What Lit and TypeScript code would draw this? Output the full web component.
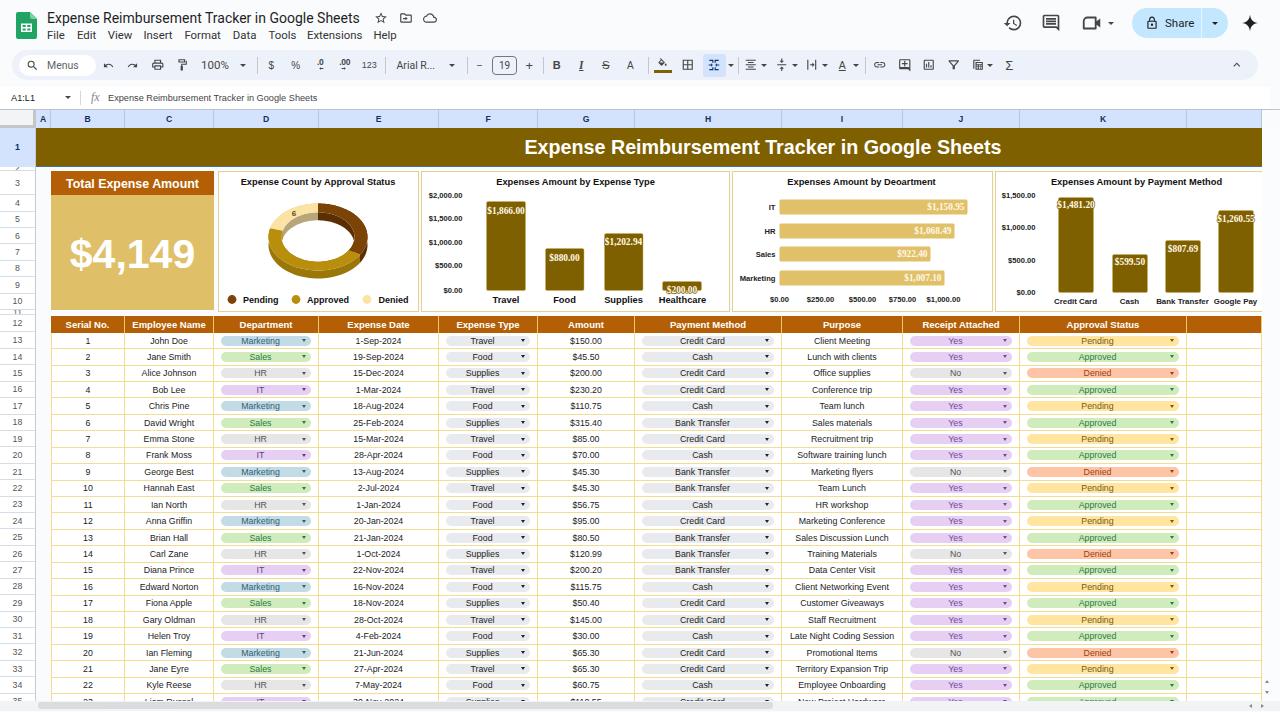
import { LitElement, html, css, svg } from "lit";
import { customElement } from "lit/decorators.js";

const P: Record<string, string> = {
  search: "M15.5 14h-.79l-.28-.27A6.47 6.47 0 0 0 16 9.5 6.5 6.5 0 1 0 9.5 16c1.61 0 3.09-.59 4.23-1.57l.27.28v.79l5 4.99L20.49 19l-4.99-5zm-6 0C7.01 14 5 11.99 5 9.5S7.01 5 9.5 5 14 7.01 14 9.5 11.99 14 9.5 14z",
  undo: "M12.5 8c-2.65 0-5.05.99-6.9 2.6L2 7v9h9l-3.62-3.62c1.39-1.16 3.16-1.88 5.12-1.88 3.54 0 6.55 2.31 7.6 5.5l2.37-.78C21.08 11.03 17.15 8 12.5 8z",
  redo: "M18.4 10.6C16.55 8.99 14.15 8 11.5 8c-4.65 0-8.58 3.03-9.96 7.22L3.9 16c1.05-3.19 4.05-5.5 7.6-5.5 1.95 0 3.73.72 5.12 1.88L13 16h9V7l-3.6 3.6z",
  print: "M19 8h-1V3H6v5H5c-1.66 0-3 1.34-3 3v6h4v4h12v-4h4v-6c0-1.66-1.34-3-3-3zM8 5h8v3H8V5zm8 12v2H8v-4h8v2zm2-2v-2H6v2H4v-4c0-.55.45-1 1-1h14c.55 0 1 .45 1 1v4h-2z",
  paint: "M6 2h12v6H6V2zm2 2v2h8V4H8zm11 1h2v7h-8v2h1v8h-4v-8h1v-4h8V5z",
  borders: "M3 3v18h18V3H3zm8 16H5v-6h6v6zm0-8H5V5h6v6zm8 8h-6v-6h6v6zm0-8h-6V5h6v6z",
  bucket: "M16.56 8.94L7.62 0 6.21 1.41l2.38 2.38-5.15 5.15c-.59.59-.59 1.54 0 2.12l5.5 5.5c.29.29.68.44 1.06.44s.77-.15 1.06-.44l5.5-5.5c.59-.58.59-1.53 0-2.12zM5.21 10L10 5.21 14.79 10H5.21zM19 11.5s-2 2.17-2 3.5c0 1.1.9 2 2 2s2-.9 2-2c0-1.33-2-3.5-2-3.5z",
  merge: "M4 3h7v5H9V5H4V3zM20 3h-7v5h2V5h5V3zM4 21h7v-5H9v3H4v2zM20 21h-7v-5h2v3h5v2zM3 11h4V9l3 3-3 3v-2H3v-2zM21 11h-4V9l-3 3 3 3v-2h4v-2z",
  align: "M7 15v2h10v-2H7zm-4 6h18v-2H3v2zm0-8h18v-2H3v2zm4-6v2h10V7H7zM3 3v2h18V3H3z",
  valign: "M8 19h3v4h2v-4h3l-4-4-4 4zm8-14h-3V1h-2v4H8l4 4 4-4zM4 11v2h16v-2H4z",
  wrap: "M4 3h2v18H4V3zm14 0h2v18h-2V3zM9 11h4V8l4 4-4 4v-3H9v-2z",
  link: "M3.9 12c0-1.71 1.39-3.1 3.1-3.1h4V7H7c-2.76 0-5 2.24-5 5s2.24 5 5 5h4v-1.9H7c-1.71 0-3.1-1.39-3.1-3.1zM8 13h8v-2H8v2zm9-6h-4v1.9h4c1.71 0 3.1 1.39 3.1 3.1s-1.39 3.1-3.1 3.1h-4V17h4c2.76 0 5-2.24 5-5s-2.24-5-5-5z",
  addc: "M20 2H4c-1.1 0-2 .9-2 2v14c0 1.1.9 2 2 2h14l4 4V4c0-1.1-.9-2-2-2zm0 15.17L18.83 16H4V4h16v13.17zM13 5h-2v4H7v2h4v4h2v-4h4V9h-4z",
  chart: "M19 3H5c-1.1 0-2 .9-2 2v14c0 1.1.9 2 2 2h14c1.1 0 2-.9 2-2V5c0-1.1-.9-2-2-2zm0 16H5V5h14v14zM7 10h2v7H7zm4-3h2v10h-2zm4 6h2v4h-2z",
  filter: "M3 4h18v2l-7 8v6h-4v-6L3 6V4zm2.6 2l6.4 7.2L18.4 6H5.6z",
  func: "M5 3h11v2H6v14H4V4a1 1 0 0 1 1-1zm3 4h13v14H8V7zm2 2v2h9V9h-9zm0 4v2h2v-2h-2zm4 0v2h2v-2h-2zm3 0v2h2v-2h-2zm-7 3v3h2v-3h-2zm4 0v3h2v-3h-2zm3 0v3h2v-3h-2z",
  up: "M7.41 15.41L12 10.83l4.59 4.58L18 14l-6-6-6 6z",
  history: "M13 3a9 9 0 0 0-9 9H1l3.89 3.89.07.14L9 12H6c0-3.87 3.13-7 7-7s7 3.13 7 7-3.13 7-7 7c-1.93 0-3.68-.79-4.94-2.06l-1.42 1.42A8.954 8.954 0 0 0 13 21a9 9 0 0 0 0-18zm-1 5v5l4.28 2.54.72-1.21-3.5-2.08V8H12z",
  comment: "M21.99 4c0-1.1-.89-2-1.99-2H4c-1.1 0-2 .9-2 2v12c0 1.1.9 2 2 2h14l4 4-.01-18zM20 4v13.17L18.83 16H4V4h16zM6 12h12v2H6zm0-3h12v2H6zm0-3h12v2H6z",
  video: "M7 5h9a1 1 0 0 1 1 1v4l4-3v10l-4-3v4a1 1 0 0 1-1 1H3a1 1 0 0 1-1-1V10a5 5 0 0 1 5-5zm0 2a3 3 0 0 0-3 3v7h11V7H7z",
  lock: "M18 8h-1V6c0-2.76-2.24-5-5-5S7 3.24 7 6v2H6c-1.1 0-2 .9-2 2v10c0 1.1.9 2 2 2h12c1.1 0 2-.9 2-2V10c0-1.1-.9-2-2-2zM9 6c0-1.66 1.34-3 3-3s3 1.34 3 3v2H9V6zm9 14H6V10h12v10zm-6-3c1.1 0 2-.9 2-2s-.9-2-2-2-2 .9-2 2 .9 2 2 2z",
  spark: "M12 1C13 8 16 11 23 12 16 13 13 16 12 23 11 16 8 13 1 12 8 11 11 8 12 1z",
  star: "M22 9.24l-7.19-.62L12 2 9.19 8.63 2 9.24l5.46 4.73L5.82 21 12 17.27 18.18 21l-1.63-7.03L22 9.24zM12 15.4l-3.76 2.27 1-4.28-3.32-2.88 4.38-.38L12 6.1l1.71 4.04 4.38.38-3.32 2.88 1 4.28L12 15.4z",
  folder: "M20 6h-8l-2-2H4c-1.11 0-2 .89-2 2v12c0 1.11.89 2 2 2h16c1.11 0 2-.89 2-2V8c0-1.11-.89-2-2-2zm0 12H4V6h5.17l2 2H20v10zM11 12v-2l4 3-4 3v-2H7v-2h4z",
  cloud: "M19.35 10.04C18.67 6.59 15.64 4 12 4 9.11 4 6.6 5.64 5.35 8.04 2.34 8.36 0 10.91 0 14c0 3.31 2.69 6 6 6h13c2.76 0 5-2.24 5-5 0-2.64-2.05-4.78-4.65-4.96zM19 18H6c-2.21 0-4-1.79-4-4 0-2.05 1.53-3.76 3.56-3.97l1.07-.11.5-.95C8.08 7.14 9.94 6 12 6c2.62 0 4.88 1.86 5.39 4.43l.3 1.5 1.53.11c1.56.1 2.78 1.41 2.78 2.96 0 1.65-1.35 3-3 3z",
  arl: "M8 12l5-5v3h9v4h-9v3z",
  arr: "M16 12l-5-5v3H2v4h9v3z",
};

const ic = (n: string, cls = "") => html`<svg class="ic ${cls}" viewBox="0 0 24 24"><path d=${P[n]}></path></svg>`;
const caret = html`<span class="caret"></span>`;

type Row = [string, string, string, string, string, string, string];
const ROWS: Row[] = [
  ["John Doe", "1-Sep-2024", "Travel", "$150.00", "Credit Card", "Client Meeting", "P"],
  ["Jane Smith", "19-Sep-2024", "Food", "$45.50", "Cash", "Lunch with clients", "A"],
  ["Alice Johnson", "15-Dec-2024", "Supplies", "$200.00", "Credit Card", "Office supplies", "D"],
  ["Bob Lee", "1-Mar-2024", "Travel", "$230.20", "Credit Card", "Conference trip", "A"],
  ["Chris Pine", "18-Aug-2024", "Food", "$110.75", "Cash", "Team lunch", "P"],
  ["David Wright", "25-Feb-2024", "Supplies", "$315.40", "Bank Transfer", "Sales materials", "A"],
  ["Emma Stone", "15-Mar-2024", "Travel", "$85.00", "Credit Card", "Recruitment trip", "P"],
  ["Frank Moss", "28-Apr-2024", "Food", "$70.00", "Cash", "Software training lunch", "A"],
  ["George Best", "13-Aug-2024", "Supplies", "$45.30", "Bank Transfer", "Marketing flyers", "D"],
  ["Hannah East", "2-Jul-2024", "Travel", "$45.30", "Bank Transfer", "Team Lunch", "P"],
  ["Ian North", "1-Jan-2024", "Food", "$56.75", "Cash", "HR workshop", "A"],
  ["Anna Griffin", "20-Jan-2024", "Travel", "$95.00", "Credit Card", "Marketing Conference", "P"],
  ["Brian Hall", "21-Jan-2024", "Food", "$80.50", "Bank Transfer", "Sales Discussion Lunch", "A"],
  ["Carl Zane", "1-Oct-2024", "Supplies", "$120.99", "Bank Transfer", "Training Materials", "D"],
  ["Diana Prince", "22-Nov-2024", "Travel", "$200.20", "Bank Transfer", "Data Center Visit", "A"],
  ["Edward Norton", "16-Nov-2024", "Food", "$115.75", "Cash", "Client Networking Event", "P"],
  ["Fiona Apple", "18-Nov-2024", "Supplies", "$50.40", "Credit Card", "Customer Giveaways", "A"],
  ["Gary Oldman", "28-Oct-2024", "Travel", "$145.00", "Credit Card", "Staff Recruitment", "P"],
  ["Helen Troy", "4-Feb-2024", "Food", "$30.00", "Cash", "Late Night Coding Session", "A"],
  ["Ian Fleming", "21-Jun-2024", "Supplies", "$65.30", "Credit Card", "Promotional Items", "D"],
  ["Jane Eyre", "27-Apr-2024", "Travel", "$65.30", "Credit Card", "Territory Expansion Trip", "P"],
  ["Kyle Reese", "7-May-2024", "Food", "$60.75", "Cash", "Employee Onboarding", "A"],
  ["Liam Russel", "30-Nov-2024", "Supplies", "$110.55", "Credit Card", "New Project Hardware", "A"],
];
const DEPTS = ["Marketing", "Sales", "HR", "IT"];
const DCLS: Record<string, string> = { Marketing: "mk", Sales: "gr", HR: "gy", IT: "pu" };
const ST: Record<string, [string, string]> = { P: ["Pending", "ye"], A: ["Approved", "gr"], D: ["Denied", "or"] };
const HEAD = ["Serial No.", "Employee Name", "Department", "Expense Date", "Expense Type", "Amount", "Payment Method", "Purpose", "Receipt Attached", "Approval Status", ""];
const COLS: [string, number][] = [["A", 15], ["B", 74], ["C", 89], ["D", 105], ["E", 120], ["F", 99], ["G", 97], ["H", 147], ["I", 121], ["J", 117], ["K", 167], ["", 75]];

// Row gutter heights, taken from the sheet's row geometry.
const RH: [number, number][] = [[1, 38.5], [2, 4.7], [3, 24], ...[4, 5, 6, 7, 8, 9, 10].map((n) => [n, 16.4] as [number, number]), [11, 5], [12, 17.5], ...Array.from({ length: 23 }, (_, i) => [13 + i, 16.43] as [number, number])];

const pill = (t: string, cls: string) => html`<span class="pill ${cls}"><span class="pt">${t}</span><i></i></span>`;

const MENU = ["File", "Edit", "View", "Insert", "Format", "Data", "Tools", "Extensions", "Help"];

function ringPoints(cx: number, cy: number, rx: number, ry: number, a0: number, a1: number) {
  const pts: [number, number][] = [];
  for (let k = 0; k <= 48; k++) {
    const t = ((a0 + ((a1 - a0) * k) / 48) * Math.PI) / 180;
    pts.push([cx + rx * Math.sin(t), cy - ry * Math.cos(t)]);
  }
  return pts;
}
const poly = (p: [number, number][]) => p.map((q) => `${q[0].toFixed(2)},${q[1].toFixed(2)}`).join(" ");

function donut() {
  const cx = 318, cy = 236.5, d = 8;
  const segs: [number, number, string, string, string][] = [
    [0, 122, "#7b4306", "#5a2f03", "#5a2f03"],
    [122, 285, "#b98e0c", "#9a7708", "#8a6a06"],
    [285, 360, "#fbe3a4", "#d6c083", "#b8a57c"],
  ];
  const shift = (p: [number, number][]) => p.map((q) => [q[0], q[1] + d] as [number, number]);
  return svg`
    ${segs.map(([a, b, , side]) => {
      const o = ringPoints(cx, cy, 49.5, 33.5, a, b);
      return svg`<polygon points=${poly([...o, ...shift(o).reverse()])} fill=${side}></polygon>`;
    })}
    ${segs.map(([a, b, , , wall]) => {
      const o = ringPoints(cx, cy, 36.5, 24.7, a, b);
      return svg`<polygon points=${poly([...o, ...shift(o).reverse()])} fill=${wall}></polygon>`;
    })}
    ${segs.map(([a, b, top]) => {
      const o = ringPoints(cx, cy, 49.5, 33.5, a, b);
      const n = ringPoints(cx, cy, 36.5, 24.7, a, b);
      return svg`<polygon points=${poly([...o, ...n.reverse()])} fill=${top}></polygon>`;
    })}
    <text x="294" y="215" class="six" text-anchor="middle">6</text>
  `;
}

const title = (x: number, t: string) => svg`<text x=${x} y="184" class="ct" text-anchor="middle">${t}</text>`;
const ax = (x: number, y: number, t: string, a = "end") => svg`<text x=${x} y=${y} class="ax" text-anchor=${a}>${t}</text>`;
const bar = (x: number, top: number, w: number, bottom: number) => svg`<rect x=${x} y=${top} width=${w} height=${bottom - top} rx="1.5" fill="#7f6000" stroke="#c9b15f" stroke-width=".5"></rect>`;
const val = (x: number, y: number, t: string, a = "middle", cls = "dv") => svg`<text x=${x} y=${y} class=${cls} text-anchor=${a}>${t}</text>`;

@customElement("app-root")
export class AppRoot extends LitElement {
  static styles = css`
    :host { display: block; width: 1280px; height: 712px; overflow: hidden; background: #f9fbfd; font-family: "Liberation Sans", Arial, sans-serif; color: #222; position: relative; }
    * { box-sizing: border-box; }
    .ic { width: 16px; height: 16px; fill: #444746; display: block; flex: none; }
    .topbar { height: 50px; display: flex; position: relative; }
    .logo { width: 21px; height: 27px; margin: 12px 10px 0 16px; flex: none; }
    .docinfo { width: 420px; }
    .doctitle { display: flex; align-items: center; height: 18px; margin-top: 9px; font: 14px Roboto, sans-serif; color: #1f1f1f; white-space: nowrap; }
    .doctitle span { width: 313px; flex: none; }
    .doctitle .ic { width: 14px; height: 14px; margin-right: 10.5px; }
    .doctitle .first { margin-left: 14px; }
    .menu { display: flex; font: 11.4px Roboto, sans-serif; color: #333; height: 16px; align-items: center; }
    .menu span:nth-child(1) { margin-right: 12px; }
    .menu span:nth-child(2) { margin-right: 11.6px; }
    .menu span:nth-child(3) { margin-right: 11px; }
    .menu span:nth-child(4) { margin-right: 11.8px; }
    .menu span:nth-child(5) { margin-right: 12px; }
    .menu span:nth-child(6) { margin-right: 12px; }
    .menu span:nth-child(7) { margin-right: 10.6px; }
    .menu span:nth-child(8) { margin-right: 11px; }
    .right { margin-left: auto; display: flex; align-items: center; height: 46px; padding-right: 21px; }
    .right .ic { width: 20px; height: 20px; }
    .right .c { margin-left: 18px; }
    .right .v { margin-left: 20px; width: 22px; height: 22px; }
    .right .caret { margin: 0 0 0 5px; }
    .share { width: 96px; height: 30px; border-radius: 15px; background: #c2e7ff; margin-left: 17.6px; display: flex; align-items: center; font: 11.5px Roboto, sans-serif; color: #1f1f1f; }
    .share .ic { width: 14px; height: 14px; margin-left: 13px; fill: #1f1f1f; }
    .share b { font-weight: 400; margin-left: 6px; width: 35.5px; }
    .share em { display: block; width: 1px; height: 30px; background: #e6f4ff; }
    .right .share .caret { margin-left: 10px; border-top-color: #1f1f1f; }
    .right .sp { margin-left: 13px; width: 18px; height: 18px; fill: #1f1f1f; }
    .toolbar { height: 30px; margin: 0 22px 0 12px; background: #edf2fa; border-radius: 15px; display: flex; align-items: center; padding-left: 7px; font-size: 10.5px; color: #444746; }
    .search { width: 77px; height: 21px; background: #fff; border-radius: 11px; display: flex; align-items: center; padding-left: 7px; font: 10.5px Roboto, sans-serif; color: #5f6368; flex: none; }
    .search .ic { width: 13px; height: 13px; margin-right: 8px; }
    .i { width: 24.5px; height: 23px; display: flex; align-items: center; justify-content: center; flex: none; font-size: 10px; color: #444746; }
    .i .ic { width: 13.5px; height: 13.5px; }
    .i .sm { width: 11px; height: 11px; }
    .caret { width: 0; height: 0; border: 3.2px solid transparent; border-top: 3.6px solid #444746; border-bottom: 0; display: block; flex: none; }
    .car { width: 8px; display: flex; justify-content: center; flex: none; }
    .sep { width: 1px; height: 17px; background: #c7c7c7; flex: none; }
    .zoom { margin-left: 7px; width: 29px; font: 11.5px Roboto, sans-serif; flex: none; }
    .ml9 { margin-left: 9px; } .ml10 { margin-left: 10px; } .ml11 { margin-left: 11px; } .ml1 { margin-left: 1px; } .ml2 { margin-left: 2px; } .ml3 { margin-left: 3px; } .ml5 { margin-left: 5px; } .mn3 { margin-left: -3px; } .mn4 { margin-left: -4px; }
    .font { width: 40px; font: 10.5px Roboto, sans-serif; flex: none; white-space: nowrap; }
    .fs { width: 25px; height: 19px; border: 1px solid #747775; border-radius: 4px; display: flex; align-items: center; justify-content: center; font: 10px Roboto, sans-serif; flex: none; }
    .merge { width: 23px; height: 23px; background: #d3e3fd; border-radius: 3px; display: flex; align-items: center; justify-content: center; flex: none; }
    .merge .ic { width: 14px; height: 14px; fill: #0b3a6e; }
    .fill { flex-direction: column; }
    .fill .ic { width: 11px; height: 11px; }
    .fill u { display: block; width: 18px; height: 2.5px; background: #7f6000; margin-top: 1.5px; }
    .bi { font-weight: 700; font-size: 11px; }
    .it { font-style: italic; font-weight: 700; font-size: 11.5px; text-decoration: underline; font-family: "Liberation Serif", serif; }
    .st { text-decoration: line-through; font-size: 11.5px; }
    .dec { flex-direction: column; font-size: 8.5px; font-weight: 700; letter-spacing: -.2px; line-height: 8px; }
    .dec .ic { width: 7px; height: 7px; margin-top: -1px; }
    .n123 { font-size: 9px; }
    .plus { font-size: 13px; }
    .rot { font-size: 10.5px; text-decoration: underline; }
    .sig { font-size: 13px; }
    .chev { margin-left: auto; margin-right: 9px; }
    .formula { margin-top: 6.5px; height: 22px; margin-right: 10px; background: #fff; display: flex; align-items: center; font-size: 9px; color: #444; }
    .cellref { width: 65px; padding-left: 11px; font-size: 9.2px; color: #222; flex: none; }
    .formula .sep { height: 14px; margin: 0 10px 0 9px; background: #d5d7da; }
    .fx { font: italic 12px "Liberation Serif", serif; color: #80868b; width: 17px; flex: none; }
    .formula .tx { font: 9.2px "Liberation Sans", sans-serif; color: #444; }
    .sheet { display: flex; flex-direction: column; margin-top: .5px; height: 591.5px; overflow: hidden; }
    .colbar { display: flex; height: 19px; flex: none; border-top: 1px solid #bcc3cc; }
    .corner { width: 36px; background: #f3f4f6; border-right: 3px solid #c4c7c5; border-bottom: 3px solid #c4c7c5; flex: none; }
    .colh { background: #d3e3fd; border-right: 1px solid #b8c6dc; display: flex; align-items: center; justify-content: center; font-size: 8.6px; font-weight: 700; color: #12305a; flex: none; }
    .sbody { display: flex; flex: 1; min-height: 0; }
    .rows { width: 36px; flex: none; background: #fff; border-right: 1px solid #c7cad0; }
    .rh { display: flex; align-items: center; justify-content: center; overflow: hidden; font-size: 8.8px; color: #555; border-bottom: 1px solid #d9dce0; }
    .rh.sel { background: #d3e3fd; font-weight: 700; color: #12305a; border-bottom: 0; }
    .main { width: 1226px; flex: none; background: #f9fbfd; }
    .gutter { flex: 1; background: #fbfcfd; }
    .band { height: 38.5px; background: #7f6000; border-bottom: 1.5px solid #44709a; color: #fff; font-weight: 700; font-size: 19.7px; display: flex; align-items: center; justify-content: center; padding: 1.5px 0 0 228px; white-space: nowrap; }
    .dash { height: 149.3px; margin-left: 15px; display: flex; padding-top: 4.2px; align-items: flex-start; }
    .total { width: 163px; height: 139px; margin-top: .8px; background: #dfc068; display: flex; flex-direction: column; flex: none; color: #fff; font-weight: 700; }
    .total .hd { height: 24px; background: #b45f06; display: flex; align-items: center; justify-content: center; font-size: 12.4px; padding-top: 1px; }
    .total .big { flex: 1; display: flex; align-items: center; justify-content: center; font-size: 41px; padding-top: 3px; }
    .chart { height: 141px; background: #fff; border: 1.5px solid #e6d08f; flex: none; }
    .chart svg { display: block; }
    .c1 { width: 201.5px; margin-left: 3.5px; }
    .c2 { width: 309px; margin-left: 2px; }
    .c3 { width: 261px; margin-left: 2px; }
    .c4 { width: 267px; margin-left: 2px; border-right: 0; }
    .ct { font: 700 9.3px "Liberation Sans", sans-serif; fill: #111; }
    .ax { font: 700 7.6px "Liberation Sans", sans-serif; fill: #222; }
    .cat { font: 700 9.3px "Liberation Sans", sans-serif; fill: #111; }
    .cat2 { font: 700 7.9px "Liberation Sans", sans-serif; fill: #222; }
    .dv { font: 700 9.4px "Liberation Serif", serif; fill: #fff8e6; stroke: #7f6000; stroke-width: 1.4px; paint-order: stroke; }
    .dh { font: 700 9.3px "Liberation Serif", serif; fill: #fff8e6; }
    .six { font: 700 8px "Liberation Sans", sans-serif; fill: #5a4a20; }
    .lg { font: 700 9px "Liberation Sans", sans-serif; fill: #111; }
    .table { margin-left: 15px; display: grid; grid-template-columns: 74px 89px 105px 120px 99px 97px 147px 121px 117px 167px 75px; grid-template-rows: 17px; grid-auto-rows: 16.43px; background: #fff; }
    .th { background: #b45f06; color: #fff; font-weight: 700; font-size: 9.5px; display: flex; align-items: center; justify-content: center; border-right: 1px solid #f1c66e; }
    .td { display: flex; align-items: center; justify-content: center; font-size: 8.8px; color: #222; border-right: 1px solid #f5dd90; border-bottom: 1px solid #f5dd90; white-space: nowrap; overflow: hidden; }
    .td.first { border-left: 1px solid #f5dd90; }
    .pill { width: 100%; margin: 0 7px; height: 10px; border-radius: 5px; display: flex; align-items: center; padding: 0 5px 0 3px; font-size: 8.8px; }
    .pt { flex: 1; text-align: center; }
    .pill i { width: 0; height: 0; border: 2.4px solid transparent; border-top: 3px solid currentColor; border-bottom: 0; margin-left: 5px; }
    .mk { background: #c3dbe4; color: #2f6075; }
    .gr { background: #d0ecbc; color: #2e7a47; }
    .gy { background: #e6e6e6; color: #555; }
    .pu { background: #e6cff2; color: #5f3c8a; }
    .ty { background: #e8eaed; color: #222; }
    .ye { background: #ffe5a0; color: #7a5a10; }
    .or { background: #fdc4a6; color: #9c3f12; }
    .yes { background: #e6cff2; color: #6f4a9a; }
    .hs { height: 10px; background: #f1f3f4; flex: none; display: flex; align-items: center; padding-left: 37.5px; }
    .thumb { width: 735px; height: 6.5px; background: #dadce0; border-radius: 3px; }
    .arrows { margin-left: auto; margin-right: 16px; display: flex; gap: 9px; }
    .arrows span { width: 0; height: 0; border: 2.2px solid transparent; }
    .arrows .al { border-right: 3px solid #888; border-left: 0; }
    .arrows .ar { border-left: 3px solid #888; border-right: 0; }
    .tabs { height: 2px; padding-left: 102px; }
    .tabs span { display: block; width: 75px; height: 2px; background: #fff; }
    .scrollv { position: absolute; left: 1265px; top: 680px; display: flex; flex-direction: column; gap: 8px; }
    .scrollv span { width: 0; height: 0; border: 2.2px solid transparent; }
    .scrollv .vu { border-bottom: 3px solid #888; border-top: 0; }
    .scrollv .vd { border-top: 3px solid #888; border-bottom: 0; }
  `;

  private chart1() {
    return html`<div class="chart c1"><svg width="198.5" height="138" viewBox="219 171.5 198.5 138">
      ${title(318, "Expense Count by Approval Status")}
      ${donut()}
      <circle cx="232" cy="299" r="4.4" fill="#7b4306"></circle>
      <text x="243" y="302.3" class="lg">Pending</text>
      <circle cx="296" cy="299" r="4.4" fill="#b98e0c"></circle>
      <text x="307" y="302.3" class="lg">Approved</text>
      <circle cx="367" cy="299" r="4.4" fill="#fbe3a4"></circle>
      <text x="378.5" y="302.3" class="lg">Denied</text>
    </svg></div>`;
  }
  private chart2() {
    return html`<div class="chart c2"><svg width="306" height="138" viewBox="422.5 171.5 306 138">
      ${title(576, "Expenses Amount by Expense Type")}
      ${ax(463, 197.5, "$2,000.00")}${ax(463, 220.5, "$1,500.00")}${ax(463, 244.5, "$1,000.00")}${ax(463, 267.5, "$500.00")}${ax(463, 292.5, "$0.00")}
      ${bar(487, 201, 39, 290)}${bar(546, 248, 38.5, 290)}${bar(605, 233, 38.5, 290)}${bar(663, 281, 39, 290)}
      ${val(506.5, 213.5, "$1,866.00")}${val(565, 260, "$880.00")}${val(624, 244, "$1,202.94")}${val(682.5, 292, "$200.00")}
      <text x="506.5" y="302.5" class="cat" text-anchor="middle">Travel</text>
      <text x="565" y="302.5" class="cat" text-anchor="middle">Food</text>
      <text x="624" y="302.5" class="cat" text-anchor="middle">Supplies</text>
      <text x="683" y="302.5" class="cat" text-anchor="middle">Healthcare</text>
    </svg></div>`;
  }
  private chart3() {
    const bars: [string, number, number, string][] = [
      ["IT", 199, 968, "$1,150.95"],
      ["HR", 223, 955, "$1,068.49"],
      ["Sales", 246, 931, "$922.40"],
      ["Marketing", 270, 945, "$1,007.10"],
    ];
    return html`<div class="chart c3"><svg width="258" height="138" viewBox="733.5 171.5 258 138">
      ${title(862, "Expenses Amount by Deoartment")}
      ${bars.map(([n, y, e, t]) => svg`
        <text x="776" y=${y + 10} class="ax" text-anchor="end">${n}</text>
        <rect x="780" y=${y} width=${e - 780} height="15" rx="1.5" fill="#e0c068"></rect>
        <text x=${e - 3} y=${y + 10.5} class="dh" text-anchor="end">${t}</text>`)}
      ${ax(780, 301.5, "$0.00", "middle")}${ax(821, 301.5, "$250.00", "middle")}${ax(863, 301.5, "$500.00", "middle")}${ax(903, 301.5, "$750.00", "middle")}${ax(944, 301.5, "$1,000.00", "middle")}
    </svg></div>`;
  }
  private chart4() {
    return html`<div class="chart c4"><svg width="265.5" height="138" viewBox="996.5 171.5 265.5 138">
      ${title(1137, "Expenses Amount by Payment Method")}
      ${ax(1036, 197.5, "$1,500.00")}${ax(1036, 229.5, "$1,000.00")}${ax(1036, 262.5, "$500.00")}${ax(1036, 294.5, "$0.00")}
      ${bar(1059, 197, 35, 292)}${bar(1113, 254, 35, 292)}${bar(1166, 240, 35, 292)}${bar(1219, 210, 35, 292)}
      ${val(1076.5, 207.5, "$1,481.20")}${val(1130.5, 264.5, "$599.50")}${val(1183.5, 251.5, "$807.69")}${val(1236.5, 221.5, "$1,260.55")}
      <text x="1076" y="303" class="cat2" text-anchor="middle">Credit Card</text>
      <text x="1130" y="303" class="cat2" text-anchor="middle">Cash</text>
      <text x="1183" y="303" class="cat2" text-anchor="middle">Bank Transfer</text>
      <text x="1236" y="303" class="cat2" text-anchor="middle">Google Pay</text>
    </svg></div>`;
  }

  render() {
    return html`
      <div class="topbar">
        <svg class="logo" viewBox="0 0 21 27">
          <path d="M2 0h12l7 7v18a2 2 0 0 1-2 2H2a2 2 0 0 1-2-2V2a2 2 0 0 1 2-2z" fill="#1fa463"></path>
          <path d="M14 0l7 7h-5a2 2 0 0 1-2-2z" fill="#7fcfa2"></path>
          <path d="M5 11.5h11v8.5H5zm1.6 1.5v2h3.1v-2zm4.7 0v2h3.1v-2zm-4.7 3.4v2.1h3.1v-2.1zm4.7 0v2.1h3.1v-2.1z" fill="#fff" fill-rule="evenodd"></path>
        </svg>
        <div class="docinfo">
          <div class="doctitle"><span>Expense Reimbursement Tracker in Google Sheets</span>${ic("star", "first")}${ic("folder")}${ic("cloud")}</div>
          <div class="menu">${MENU.map((m) => html`<span>${m}</span>`)}</div>
        </div>
        <div class="right">
          ${ic("history")}${ic("comment", "c")}${ic("video", "v")}${caret}
          <div class="share">${ic("lock")}<b>Share</b><em></em>${caret}</div>
          ${ic("spark", "sp")}
        </div>
      </div>
      <div class="toolbar">
        <div class="search">${ic("search")}Menus</div>
        <div class="i">${ic("undo", "sm")}</div><div class="i">${ic("redo", "sm")}</div><div class="i">${ic("print")}</div><div class="i">${ic("paint")}</div>
        <span class="zoom">100%</span><span class="car ml9">${caret}</span><span class="sep ml10"></span>
        <div class="i ml1">$</div><div class="i">%</div><div class="i dec">.0${ic("arl")}</div><div class="i dec">.00${ic("arr")}</div><div class="i n123">123</div>
        <span class="sep ml3"></span>
        <span class="font ml11">Arial R...</span><span class="car ml11">${caret}</span><span class="sep ml11"></span>
        <div class="i">−</div><div class="fs">19</div><div class="i plus">+</div><span class="sep ml1"></span>
        <div class="i bi ml1">B</div><div class="i it">I</div><div class="i st">S</div><div class="i">A</div>
        <span class="sep ml5"></span>
        <div class="i fill ml2">${ic("bucket")}<u></u></div><div class="i">${ic("borders")}</div>
        <div class="merge ml3">${ic("merge")}</div><span class="car ml1">${caret}</span><span class="sep ml3"></span>
        <div class="i">${ic("align")}</div><span class="car mn3">${caret}</span>
        <div class="i ml1">${ic("valign")}</div><span class="car mn3">${caret}</span>
        <div class="i ml1">${ic("wrap")}</div><span class="car mn3">${caret}</span>
        <div class="i ml1 rot">A</div><span class="car mn3">${caret}</span>
        <span class="sep ml5"></span>
        <div class="i ml2">${ic("link")}</div><div class="i">${ic("addc")}</div><div class="i">${ic("chart")}</div><div class="i">${ic("filter")}</div><div class="i">${ic("func")}</div>
        <span class="car mn4">${caret}</span><div class="i sig ml3">Σ</div>
        <div class="i chev">${ic("up")}</div>
      </div>
      <div class="formula">
        <span class="cellref">A1:L1</span>${caret}<span class="sep"></span><span class="fx">fx</span><span class="tx">Expense Reimbursement Tracker in Google Sheets</span>
      </div>
      <div class="sheet">
        <div class="colbar"><div class="corner"></div>
          ${COLS.map(([c, w]) => html`<div class="colh" style="width:${w}px">${c}</div>`)}
        </div>
        <div class="sbody">
          <div class="rows">
            ${RH.map(([n, h]) => html`<div class="rh ${n === 1 ? "sel" : ""}" style="height:${h}px">${n}</div>`)}
          </div>
          <div class="main">
            <div class="band">Expense Reimbursement Tracker in Google Sheets</div>
            <div class="dash">
              <div class="total"><div class="hd">Total Expense Amount</div><div class="big">$4,149</div></div>
              ${this.chart1()}${this.chart2()}${this.chart3()}${this.chart4()}
            </div>
            <div class="table">
              ${HEAD.map((h) => html`<div class="th">${h}</div>`)}
              ${ROWS.map((r, i) => {
                const dept = DEPTS[(i < 11 ? i : i - 11) % 4];
                const [stT, stC] = ST[r[6]];
                const rec = r[6] === "D" ? "No" : "Yes";
                return html`
                  <div class="td first">${i + 1}</div>
                  <div class="td">${r[0]}</div>
                  <div class="td">${pill(dept, DCLS[dept])}</div>
                  <div class="td">${r[1]}</div>
                  <div class="td">${pill(r[2], "ty")}</div>
                  <div class="td">${r[3]}</div>
                  <div class="td">${pill(r[4], "ty")}</div>
                  <div class="td">${r[5]}</div>
                  <div class="td">${pill(rec, rec === "Yes" ? "yes" : "gy")}</div>
                  <div class="td">${pill(stT, stC)}</div>
                  <div class="td"></div>`;
              })}
            </div>
          </div>
          <div class="gutter"></div>
        </div>
      </div>
      <div class="hs"><div class="thumb"></div><div class="arrows"><span class="al"></span><span class="ar"></span></div></div>
      <div class="tabs"><span></span></div>
      <div class="scrollv"><span class="vu"></span><span class="vd"></span></div>
    `;
  }
}
